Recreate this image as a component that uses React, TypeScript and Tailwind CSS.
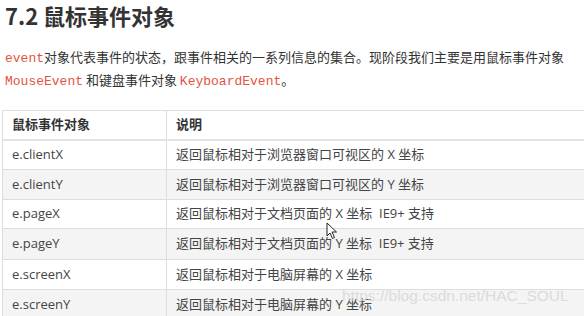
import React from "react";

const rows: { a: string; b: string; g: boolean; h: string }[] = [
  { a: "e.clientX", b: "返回鼠标相对于浏览器窗口可视区的 X 坐标", g: false, h: "h-[29px]" },
  { a: "e.clientY", b: "返回鼠标相对于浏览器窗口可视区的 Y 坐标", g: true, h: "h-[30px]" },
  { a: "e.pageX", b: "返回鼠标相对于文档页面的 X 坐标  IE9+ 支持", g: false, h: "h-[29px]" },
  { a: "e.pageY", b: "返回鼠标相对于文档页面的 Y 坐标  IE9+ 支持", g: true, h: "h-[31px]" },
  { a: "e.screenX", b: "返回鼠标相对于电脑屏幕的 X 坐标", g: false, h: "h-[30px]" },
  { a: "e.screenY", b: "返回鼠标相对于电脑屏幕的 Y 坐标", g: true, h: "h-[30px]" },
];

const code = "font-['Liberation_Mono',monospace] text-[#e4533f]";

export default function App() {
  return (
    <div className="relative w-[584px] h-[316px] overflow-hidden bg-white font-['Noto_Sans_CJK_SC',sans-serif]">
      <div className="pl-[5px]">
        <h1 className="h-[30px] text-[22px] leading-[30px] font-bold text-[#333333]">7.2 鼠标事件对象</h1>
        <div className="mt-[15px] text-[13px] text-[#333333] whitespace-nowrap">
          <div className="h-[23px] leading-[23px] overflow-hidden">
            <span className={code}>event</span>对象代表事件的状态，跟事件相关的一系列信息的集合。现阶段我们主要是用鼠标事件对象
          </div>
          <div className="h-[23px] leading-[23px] overflow-hidden">
            <span className={code}>MouseEvent</span> 和键盘事件对象 <span className={code}>KeyboardEvent</span>。
          </div>
        </div>
      </div>
      <div className="mt-[19px] ml-[2px] w-[620px] border-t border-l border-[#dddddd] font-['Open_Sans','Noto_Sans_CJK_SC',sans-serif] text-[13px] text-[#333333]">
        <div className="flex h-[30px] border-b-2 border-[#e4e4e4] font-bold">
          <div className="w-[164px] border-r border-[#dddddd] pl-[9px] flex items-center">鼠标事件对象</div>
          <div className="flex-1 pl-[9px] flex items-center">说明</div>
        </div>
        {rows.map((r) => (
          <div key={r.a} className={`flex ${r.h} border-b border-[#dddddd] ${r.g ? "bg-[#f4f4f4]" : "bg-white"}`}>
            <div className="w-[164px] border-r border-[#dddddd] pl-[9px] flex items-center text-[#444444]">{r.a}</div>
            <div className="flex-1 pl-[9px] flex items-center whitespace-pre text-[#444444]">{r.b}</div>
          </div>
        ))}
      </div>
      <div className="absolute left-[342px] top-[285px] text-[15.5px] leading-[22px] font-['Liberation_Sans',sans-serif] text-[#d6d6d6] opacity-80 whitespace-nowrap">
        https://blog.csdn.net/HAC_SOUL
      </div>
      <svg className="absolute left-[326px] top-[222px]" width="12" height="18" viewBox="0 0 12 18">
        <path d="M1 1 L1 14 L4 11 L6.5 16.5 L8.5 15.5 L6 10 L10.5 10 Z" fill="white" stroke="#222" strokeWidth="1" strokeLinejoin="round" />
      </svg>
    </div>
  );
}
